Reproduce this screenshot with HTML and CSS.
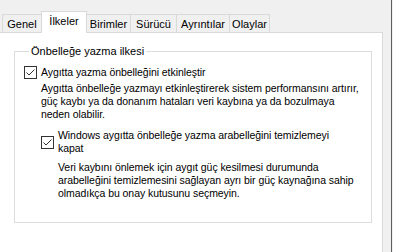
FILE: index.html
```html
<!DOCTYPE html>
<html lang="tr">
<head>
    <meta charset="UTF-8">
    <title>Aygıt Özellikleri</title>
    <link rel="stylesheet" href="styles.css">
</head>
<body>
    <div class="window">
        <div class="tabs">
            <div class="tab tab-genel">Genel</div>
            <div class="tab tab-ilkeler active">İlkeler</div>
            <div class="tab tab-birimler">Birimler</div>
            <div class="tab tab-surucu">Sürücü</div>
            <div class="tab tab-ayrintilar">Ayrıntılar</div>
            <div class="tab tab-olaylar">Olaylar</div>
        </div>

        <div class="panel">
            <fieldset class="group">
                <legend>Önbelleğe yazma ilkesi</legend>

                <label class="option">
                    <span class="box">
                        <svg width="11" height="11" viewBox="0 0 11 11"><path d="M1.5 5.5 L4 8 L9.5 2.5" fill="none" stroke="#333" stroke-width="1"/></svg>
                    </span>
                    <span class="option-text">Aygıtta yazma önbelleğini etkinleştir</span>
                </label>
                <p class="desc">Aygıtta önbelleğe yazmayı etkinleştirerek sistem performansını artırır,<br>güç kaybı ya da donanım hataları veri kaybına ya da bozulmaya<br>neden olabilir.</p>

                <div class="sub">
                    <label class="option">
                        <span class="box">
                            <svg width="11" height="11" viewBox="0 0 11 11"><path d="M1.5 5.5 L4 8 L9.5 2.5" fill="none" stroke="#333" stroke-width="1"/></svg>
                        </span>
                        <span class="option-text">Windows aygıtta önbelleğe yazma arabelleğini temizlemeyi<br>kapat</span>
                    </label>
                    <p class="desc desc-sub">Veri kaybını önlemek için aygıt güç kesilmesi durumunda<br>arabelleğini temizlemesini sağlayan ayrı bir güç kaynağına sahip<br>olmadıkça bu onay kutusunu seçmeyin.</p>
                </div>
            </fieldset>
        </div>
    </div>
</body>
</html>
```

FILE: styles.css
```css
body {
    margin: 0;
    background-color: #f0f0f0;
    font-family: 'Liberation Sans', Arial, sans-serif;
    font-size: 10.5px;
    line-height: 13px;
    letter-spacing: -0.06px;
    color: #000;
}

.window {
    width: 392px;
    height: 252px;
    box-sizing: border-box;
    border-right: 1px solid #5c5c5c;
    padding-right: 8px;
    display: flex;
    flex-direction: column;
}

.tabs {
    height: 32px;
    display: flex;
    align-items: flex-end;
    padding-left: 2px;
    font-size: 11px;
    letter-spacing: 0;
}

.tab {
    height: 18px;
    line-height: 19px;
    border: 1px solid #d9d9d9;
    border-bottom: none;
    margin-right: -1px;
    text-align: center;
    box-sizing: border-box;
    background-color: #f0f0f0;
}

.tab-genel { width: 40px; }
.tab-ilkeler { width: 46px; }
.tab-birimler { width: 45px; }
.tab-surucu { width: 47px; }
.tab-ayrintilar { width: 54px; }
.tab-olaylar { width: 41px; }

.tab.active {
    height: 22px;
    line-height: 19px;
    margin-bottom: -1px;
    background-color: #fff;
    position: relative;
    z-index: 1;
}

.panel {
    flex: 1;
    background-color: #fff;
    border-top: 1px solid #d9d9d9;
    border-right: 1px solid #d9d9d9;
    padding: 12px 10px 0 14px;
    white-space: nowrap;
}

.group {
    margin: 0;
    padding: 8px 0 0 9px;
    height: 178px;
    box-sizing: border-box;
    border: 1px solid #dcdcdc;
}

.group legend {
    padding: 0 2px;
    margin-left: 5px;
    font-size: 11px;
    letter-spacing: 0;
}

.option {
    display: flex;
    align-items: center;
    gap: 4px;
}

.box {
    width: 11px;
    height: 11px;
    border: 1px solid #333;
    background-color: #fff;
    display: flex;
}

.desc {
    margin: 3px 0 0 17px;
}

.desc-sub {
    margin-top: 6px;
}

.sub {
    margin: 8px 0 0 17px;
}
```
